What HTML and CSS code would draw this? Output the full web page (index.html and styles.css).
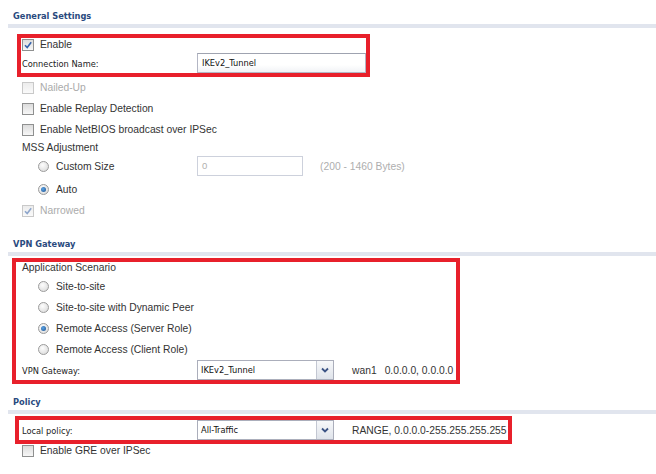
FILE: index.html
```html
<!DOCTYPE html>
<html lang="en">
<head>
    <meta charset="UTF-8">
    <title>VPN Connection</title>
    <link rel="stylesheet" href="styles.css">
</head>
<body>
    <div class="page">
        <!-- General Settings -->
        <div class="section-title first">General Settings</div>
        <div class="mark mark-general">
            <div class="row row-enable">
                <span class="cb checked"><svg viewBox="0 0 10 10"><path d="M2 5.2 L4.2 7.6 L8.2 2.2"/></svg></span>
                <span class="lbl">Enable</span>
            </div>
            <div class="row row-field">
                <span class="field-label">Connection Name:</span>
                <span class="text-input name-input">IKEv2_Tunnel</span>
            </div>
        </div>
        <div class="row">
            <span class="cb disabled"></span>
            <span class="lbl disabled">Nailed-Up</span>
        </div>
        <div class="row">
            <span class="cb"></span>
            <span class="lbl">Enable Replay Detection</span>
        </div>
        <div class="row">
            <span class="cb"></span>
            <span class="lbl">Enable NetBIOS broadcast over IPSec</span>
        </div>
        <div class="row row-caption">MSS Adjustment</div>
        <div class="row row-custom">
            <span class="field-label radio-field">
                <span class="radio"></span>
                <span class="lbl">Custom Size</span>
            </span>
            <span class="text-input size-input">0</span>
            <span class="hint">(200 - 1460 Bytes)</span>
        </div>
        <div class="row row-auto">
            <span class="radio-field">
                <span class="radio selected"></span>
                <span class="lbl">Auto</span>
            </span>
        </div>
        <div class="row">
            <span class="cb checked disabled"><svg viewBox="0 0 10 10"><path d="M2 5.2 L4.2 7.6 L8.2 2.2"/></svg></span>
            <span class="lbl disabled">Narrowed</span>
        </div>

        <!-- VPN Gateway -->
        <div class="section-title">VPN Gateway</div>
        <div class="mark mark-vpn">
            <div class="row row-scenario">Application Scenario</div>
            <div class="row">
                <span class="radio-field"><span class="radio"></span><span class="lbl">Site-to-site</span></span>
            </div>
            <div class="row">
                <span class="radio-field"><span class="radio"></span><span class="lbl">Site-to-site with Dynamic Peer</span></span>
            </div>
            <div class="row">
                <span class="radio-field"><span class="radio selected"></span><span class="lbl">Remote Access (Server Role)</span></span>
            </div>
            <div class="row">
                <span class="radio-field"><span class="radio"></span><span class="lbl">Remote Access (Client Role)</span></span>
            </div>
            <div class="row row-field">
                <span class="field-label">VPN Gateway:</span>
                <span class="select">
                    <span class="select-value">IKEv2_Tunnel</span>
                    <span class="select-arrow"><svg viewBox="0 0 8 6"><path d="M1 1.5 L4 4.5 L7 1.5"/></svg></span>
                </span>
                <span class="info">wan1</span><span class="info addr">0.0.0.0, 0.0.0.0</span>
            </div>
        </div>

        <!-- Policy -->
        <div class="section-title policy-title">Policy</div>
        <div class="mark mark-policy">
            <div class="row row-field">
                <span class="field-label">Local policy:</span>
                <span class="select">
                    <span class="select-value">All-Traffic</span>
                    <span class="select-arrow"><svg viewBox="0 0 8 6"><path d="M1 1.5 L4 4.5 L7 1.5"/></svg></span>
                </span>
                <span class="info">RANGE, 0.0.0.0-255.255.255.255</span>
            </div>
        </div>
        <div class="row row-last">
            <span class="cb"></span>
            <span class="lbl">Enable GRE over IPSec</span>
        </div>
    </div>
</body>
</html>
```

FILE: styles.css
```css
/* Ogolne */
body {
    margin: 0;
    background: #fff;
    font-family: "Liberation Sans", Arial, sans-serif;
    font-size: 10.3px;
    color: #333;
}

.page {
    width: 656px;
    height: 474px;
    overflow: hidden;
}

/* Naglowki sekcji */
.section-title {
    margin: 7px 0 0 8px;
    padding: 8px 0 0 5px;
    height: 16px;
    line-height: 16px;
    border-bottom: 4px solid #e1e5ee;
    font-family: "DejaVu Sans Condensed", "DejaVu Sans", sans-serif;
    font-stretch: condensed;
    font-weight: bold;
    font-size: 9.2px;
    color: #2a4a7e;
}

.section-title.first {
    margin-top: 0;
}

.section-title.policy-title {
    margin-top: 2px;
}

/* Czerwone ramki */
.mark {
    box-sizing: border-box;
    border: 4px solid #e8202b;
}

.mark .row {
    padding-left: 0;
}

.mark-general {
    margin: 6px 0 0 17px;
    width: 353px;
    padding-left: 1px;
}

.mark-vpn {
    margin: 2px 0 0 12px;
    width: 448px;
    padding-left: 6px;
}

.mark-policy {
    margin: 2px 0 0 15px;
    width: 497px;
    padding-left: 3px;
}

/* Wiersze */
.row {
    display: flex;
    align-items: center;
    height: 21px;
    padding-left: 22px;
    white-space: nowrap;
}

.row-enable { height: 14px; align-items: flex-start; padding-top: 1px; }
.row-field { height: 20px; }
.row-caption { height: 14px; }
.row-custom { height: 24px; }
.row-auto { height: 22px; }
.row-last { height: 13px; }

.row-scenario {
    height: 14px;
    align-items: flex-start;
    line-height: 11px;
}

.lbl.disabled {
    color: #ababab;
}

.field-label {
    box-sizing: border-box;
    width: 175px;
    flex: none;
    font-family: "DejaVu Sans Condensed", "DejaVu Sans", sans-serif;
    font-stretch: condensed;
    font-size: 9.2px;
    color: #222;
}

.radio-field {
    display: flex;
    align-items: center;
    padding-left: 16px;
    font-family: "Liberation Sans", Arial, sans-serif;
    font-size: 10.3px;
    color: #333;
}

/* Checkbox */
.cb {
    box-sizing: border-box;
    width: 12px;
    height: 12px;
    margin-right: 6px;
    flex: none;
    border: 1px solid #8f9090;
    background: linear-gradient(#dcdcdc, #f7f7f7);
    display: flex;
}

.cb svg {
    width: 10px;
    height: 10px;
}

.cb path {
    fill: none;
    stroke: #3563ad;
    stroke-width: 1.6;
}

.cb.disabled {
    border-color: #c9c9c9;
    background: linear-gradient(#ececec, #fafafa);
}

.cb.disabled path {
    stroke: #8ea6cc;
}

/* Radio */
.radio {
    box-sizing: border-box;
    width: 11px;
    height: 11px;
    margin-right: 7px;
    flex: none;
    border-radius: 50%;
    border: 1px solid #9b9b9b;
    background: radial-gradient(circle at 40% 35%, #fdfdfd, #d6d6d6);
    position: relative;
}

.radio.selected::after {
    content: "";
    position: absolute;
    left: 2px;
    top: 2px;
    width: 5px;
    height: 5px;
    border-radius: 50%;
    background: radial-gradient(circle at 40% 40%, #5aa4e6, #1d4f8c);
}

/* Pola tekstowe */
.text-input {
    box-sizing: border-box;
    height: 20px;
    line-height: 18px;
    padding-left: 4px;
    border: 1px solid #b3b6c4;
    border-top-color: #9fa3b0;
    background: linear-gradient(#fff 60%, #f1f3f6);
}

.name-input {
    width: 169px;
    font-family: "DejaVu Sans Condensed", "DejaVu Sans", sans-serif;
    font-stretch: condensed;
    font-size: 9.2px;
    color: #111;
}

.size-input {
    width: 106px;
    border-color: #cdd1dc;
    background: #fff;
    color: #b0b0b0;
    font-size: 9.5px;
}

.hint {
    margin-left: 17px;
    color: #aeaeae;
}

/* Lista rozwijana */
.select {
    box-sizing: border-box;
    width: 137px;
    height: 20px;
    flex: none;
    display: flex;
    border: 1px solid #abaebb;
    background: #fff;
}

.select-value {
    flex: 1;
    line-height: 18px;
    padding-left: 3px;
    font-family: "DejaVu Sans Condensed", "DejaVu Sans", sans-serif;
    font-stretch: condensed;
    font-size: 9.2px;
    color: #111;
}

.select-arrow {
    width: 16px;
    border-left: 1px solid #c3c7d2;
    background: linear-gradient(#f7f8fa, #dfe3ea);
    display: flex;
    align-items: center;
    justify-content: center;
}

.select-arrow svg {
    width: 8px;
    height: 6px;
}

.select-arrow path {
    fill: none;
    stroke: #3b5384;
    stroke-width: 1.8;
}

.info {
    margin-left: 18px;
    color: #333;
}

.info.addr {
    margin-left: 8px;
}
```
